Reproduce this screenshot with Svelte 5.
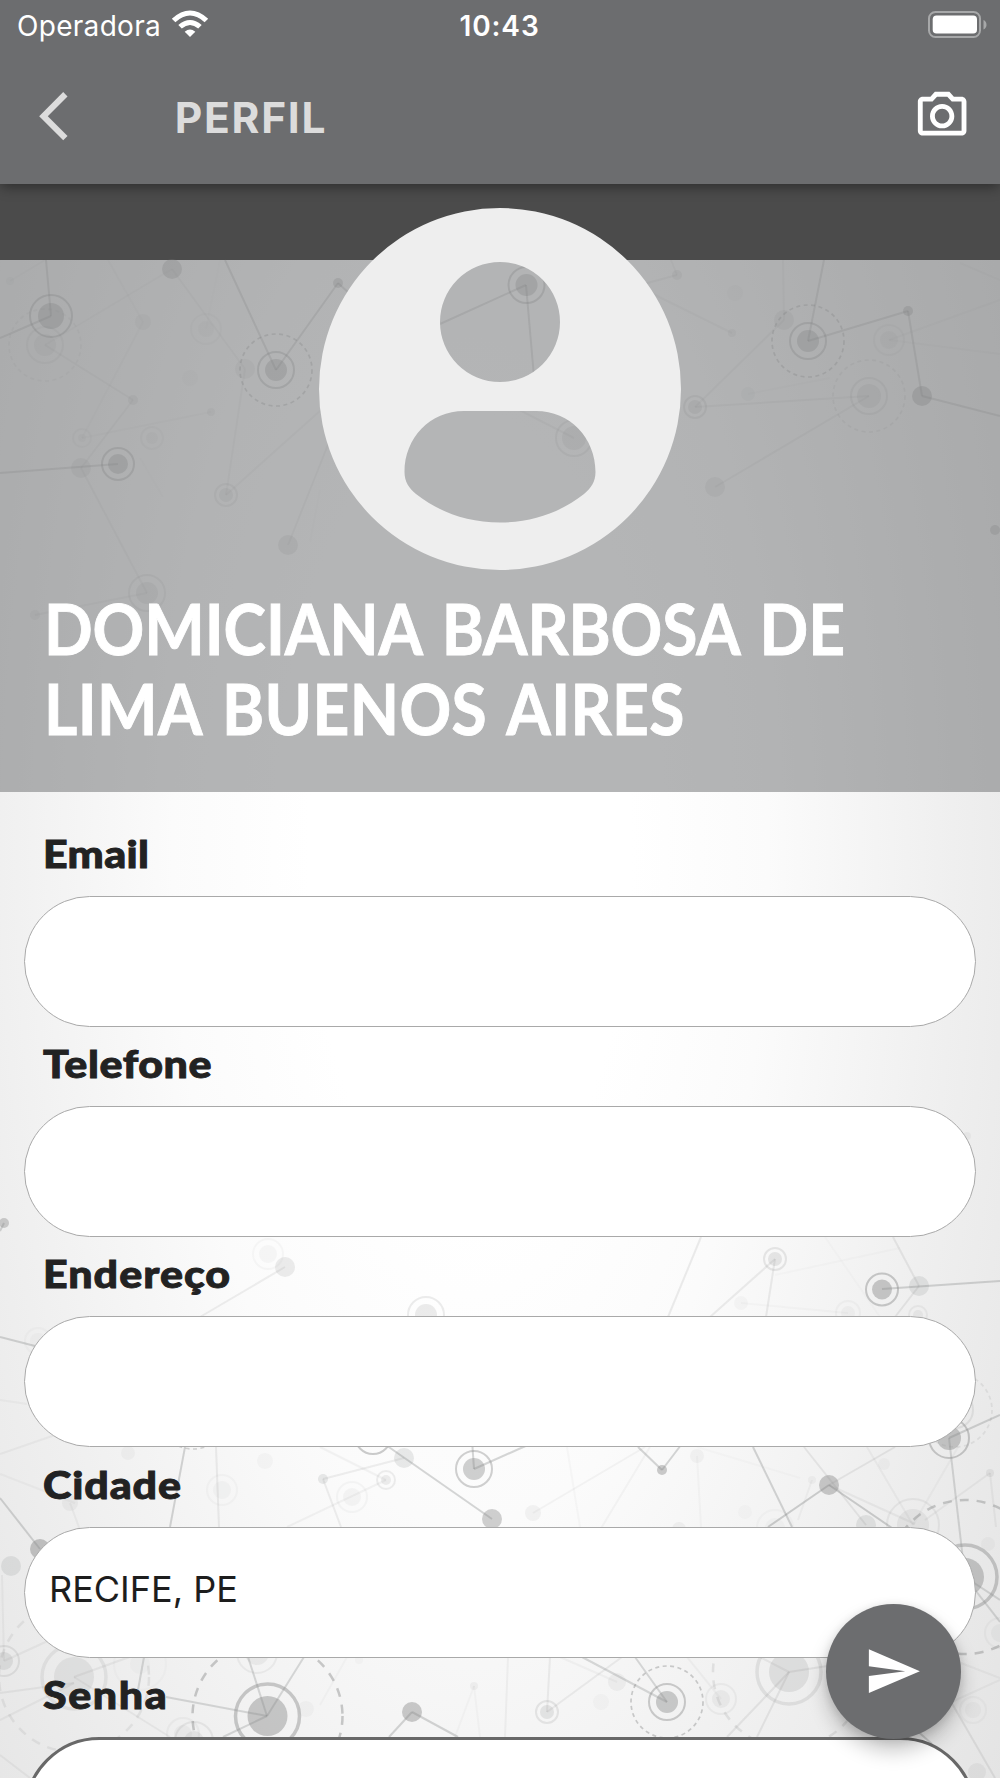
<script lang="ts">
  type Node = { x: number; y: number; r: number; o: number; ring?: number; dash?: number };

  const fields = [
    { label: "Email", value: "", spacing: 0.3 },
    { label: "Telefone", value: "", spacing: 0.5 },
    { label: "Endereço", value: "", spacing: 0.9 },
    { label: "Cidade", value: "RECIFE, PE", spacing: 0.8 },
    { label: "Senha", value: "", spacing: 1.4, focused: true },
  ];

  // x, y, radius, opacity, ring radius, dashed radius
  const nodes: Node[] = [
    [51, 316, 13, 0.5, 21], [45, 345, 11, 0.15, 18, 36], [172, 269, 10, 0.45], [276, 370, 11, 0.5, 18, 36],
    [245, 369, 10, 0.15], [338, 283, 5, 0.45], [133, 400, 5, 0.2], [10, 281, 4, 0.1], [143, 322, 8, 0.12],
    [206, 329, 8, 0.08, 15], [190, 378, 8, 0.06], [211, 412, 4, 0.15], [82, 438, 4, 0.1, 9], [81, 468, 10, 0.2],
    [118, 464, 10, 0.5, 16], [152, 438, 6, 0.1, 11], [226, 495, 7, 0.2, 11], [288, 545, 10, 0.25],
    [147, 593, 11, 0.2, 18], [35, 615, 5, 0.15], [526.5, 285, 11, 0.5, 18], [574, 438, 12, 0.2, 18],
    [677, 275, 5, 0.2], [732, 333, 4, 0.15], [735, 293, 8, 0.08], [784, 320, 10, 0.2], [808, 341, 11, 0.5, 18, 36],
    [908, 311, 5, 0.5], [922, 396, 10, 0.55], [889, 340, 9, 0.12, 15], [869, 396, 12, 0.22, 18, 36],
    [695, 407, 7, 0.25, 11], [748, 394, 7, 0.1], [715, 487, 10, 0.2], [995, 530, 5, 0.45],
    [967, 1136, 4, 0.1], [4, 1223, 5, 0.45], [268, 1254, 9, 0.06, 15], [285, 1267, 10, 0.18], [426, 1315, 11, 0.18, 18],
    [775, 1259, 7, 0.2, 11], [882, 1289.5, 10, 0.5, 16], [919, 1286, 10, 0.2], [741, 1303, 7, 0.06],
    [848, 1313, 7, 0.07, 12], [918, 1315, 5, 0.12, 9], [38, 1341, 8, 0.05, 13], [949, 1438, 12, 0.5, 20],
    [955, 1410, 11, 0.18, 18, 37], [193, 1413, 11, 0.4, 18, 36], [373, 1436, 11, 0.5, 18], [492, 1519, 10, 0.45],
    [474, 1469, 11, 0.45, 18], [404, 1458, 10, 0.2], [323, 1479, 5, 0.2], [386, 1480, 5, 0.15, 9],
    [352, 1497, 9, 0.07, 15], [265, 1461, 8, 0.06], [222, 1490, 9, 0.06, 15], [128, 1453, 7, 0.07],
    [70, 1503, 8, 0.1], [40, 1549, 10, 0.55], [11, 1566, 10, 0.2], [662, 1470, 5, 0.5], [829, 1485, 10, 0.5],
    [866, 1525, 10, 0.2], [913, 1525, 16, 0.13, 26], [965, 1577, 19, 0.5, 32, 77], [533, 1513, 8, 0.1],
    [697, 1456, 7, 0.08], [812, 1480, 4, 0.08], [990, 1473, 4, 0.15], [679, 1529, 7, 0.1], [884, 1464, 6, 0.06],
    [775, 1528, 10, 0.05, 18], [745, 1512, 7, 0.04], [74, 1677, 20, 0.16, 32, 75], [267.5, 1716, 20, 0.5, 32, 75],
    [257, 1653, 12, 0.12, 20], [4, 1661, 9, 0.2, 15], [412, 1712, 10, 0.5], [474, 1686, 4, 0.1],
    [547, 1712, 7, 0.2, 11], [667, 1702, 11, 0.48, 18, 36], [617, 1682, 9, 0.1], [721, 1699, 9, 0.1, 15],
    [789, 1672, 20, 0.2, 32, 76], [601, 1702, 8, 0.05], [183, 1734, 9, 0.08, 16], [194, 1741, 10, 0.15, 19],
    [977, 1772, 9, 0.12], [973, 1710, 8, 0.07, 13], [1000, 1633, 9, 0.08, 15], [988, 1544, 7, 0.07],
    [140, 1664, 10, 0.04, 26], [306, 1709, 8, 0.06], [359, 1660, 4, 0.05],
  ].map(([x, y, r, o, ring, dash]) => ({ x, y, r, o, ring, dash }));

  // x1, y1, x2, y2, opacity
  const links: number[][] = [
    [46, 260, 51, 316, 0.4], [0, 338, 51, 316, 0.4], [0, 473, 118, 464, 0.4], [225, 260, 276, 370, 0.4],
    [276, 370, 338, 283, 0.4], [338, 283, 350, 294, 0.4], [172, 269, 45, 345, 0.1], [172, 269, 245, 369, 0.12],
    [245, 369, 226, 495, 0.12], [226, 495, 330, 402, 0.12], [45, 345, 133, 400, 0.14], [133, 400, 81, 468, 0.14],
    [81, 468, 147, 593, 0.14], [147, 593, 35, 615, 0.12], [211, 412, 82, 438, 0.08], [143, 322, 82, 438, 0.07],
    [143, 322, 108, 260, 0.07], [10, 281, 45, 260, 0.07], [206, 329, 220, 260, 0.05], [288, 545, 345, 402, 0.15],
    [140, 458, 163, 497, 0.05], [310, 542, 320, 490, 0.04], [440, 324, 526, 285, 0.4], [526, 285, 536, 400, 0.4],
    [574, 438, 500, 400, 0.15], [677, 275, 640, 285, 0.15], [677, 275, 671, 260, 0.12], [732, 333, 645, 290, 0.12],
    [784, 320, 783, 260, 0.12], [784, 320, 695, 407, 0.14], [695, 407, 869, 396, 0.16], [869, 396, 715, 487, 0.16],
    [824, 260, 808, 341, 0.4], [808, 341, 908, 311, 0.4], [908, 311, 922, 396, 0.4], [922, 396, 1000, 416, 0.4],
    [889, 340, 1000, 300, 0.1], [889, 340, 1000, 354, 0.08], [960, 263, 1000, 280, 0.08], [748, 394, 830, 378, 0.06],
    [285, 1267, 200, 1317, 0.15], [775, 1259, 710, 1317, 0.17], [775, 1259, 766, 1317, 0.17], [701, 1237, 668, 1317, 0.18],
    [882, 1289, 1000, 1281, 0.4], [893, 1237, 919, 1286, 0.18], [919, 1286, 895, 1317, 0.18], [741, 1303, 848, 1313, 0.05],
    [825, 1237, 880, 1317, 0.04], [775, 1275, 900, 1248, 0.04], [4, 1223, 0, 1231, 0.4], [0, 1337, 35, 1346, 0.4],
    [0, 1400, 27, 1404, 0.08], [0, 1454, 55, 1435, 0.1], [0, 1474, 75, 1503, 0.08], [949, 1438, 1000, 1415, 0.4],
    [949, 1438, 965, 1577, 0.35], [185, 1447, 170, 1527, 0.4], [216, 1447, 219, 1527, 0.16], [373, 1436, 492, 1519, 0.4],
    [474, 1469, 472, 1440, 0.4], [474, 1469, 530, 1444, 0.4], [404, 1458, 323, 1479, 0.15], [323, 1479, 341, 1527, 0.15],
    [386, 1480, 287, 1527, 0.1], [386, 1480, 320, 1447, 0.1], [70, 1503, 80, 1530, 0.1], [0, 1498, 40, 1549, 0.4],
    [662, 1470, 638, 1447, 0.4], [662, 1470, 681, 1445, 0.4], [753, 1447, 792, 1527, 0.4], [829, 1485, 768, 1527, 0.45],
    [829, 1485, 892, 1528, 0.45], [829, 1485, 895, 1447, 0.18], [804, 1447, 866, 1525, 0.18], [829, 1485, 915, 1524, 0.12],
    [867, 1447, 913, 1525, 0.1], [958, 1447, 913, 1525, 0.08], [533, 1513, 645, 1447, 0.09], [650, 1447, 600, 1530, 0.08],
    [567, 1447, 580, 1527, 0.06], [697, 1456, 701, 1527, 0.06], [697, 1447, 800, 1478, 0.04], [990, 1473, 925, 1520, 0.12],
    [990, 1473, 996, 1527, 0.12], [812, 1480, 798, 1520, 0.08], [965, 1577, 1000, 1600, 0.35], [965, 1577, 1000, 1622, 0.35],
    [267, 1716, 248, 1657, 0.35], [267, 1716, 304, 1657, 0.35], [267, 1716, 166, 1697, 0.35], [267, 1716, 223, 1737, 0.35],
    [144, 1657, 138, 1690, 0.35], [74, 1677, 135, 1655, 0.14], [0, 1693, 74, 1683, 0.14], [0, 1720, 74, 1683, 0.12],
    [74, 1677, 170, 1737, 0.12], [0, 1755, 30, 1778, 0.12], [4, 1661, 50, 1640, 0.12], [4, 1661, 2, 1575, 0.1],
    [412, 1712, 389, 1737, 0.4], [412, 1712, 458, 1737, 0.4], [474, 1686, 455, 1737, 0.06], [474, 1686, 480, 1737, 0.06],
    [547, 1712, 550, 1657, 0.15], [547, 1712, 622, 1657, 0.15], [667, 1702, 582, 1657, 0.35], [667, 1702, 635, 1657, 0.35],
    [508, 1657, 505, 1737, 0.1], [560, 1657, 617, 1682, 0.08], [687, 1657, 721, 1699, 0.08], [789, 1672, 727, 1737, 0.18],
    [789, 1672, 757, 1737, 0.18], [789, 1672, 840, 1664, 0.18], [760, 1657, 789, 1672, 0.15], [950, 1700, 995, 1778, 0.2],
    [940, 1655, 1000, 1678, 0.1], [945, 1705, 1000, 1680, 0.1], [905, 1720, 932, 1744, 0.4], [347, 1657, 320, 1705, 0.06],
  ];

  // the upper part of the network is fainter, it sits under the profile header
  const fade = (y: number) => (y < 800 ? 0.54 : 0.86);
</script>

<div class="page">
  <svg class="network" width="1000" height="1778" viewBox="0 0 1000 1778" fill="none" stroke="#898a8a" stroke-width="2">
    {#each links as [x1, y1, x2, y2, o]}
      <line {x1} {y1} {x2} {y2} opacity={o * fade(y1)} />
    {/each}
    {#each nodes as n}
      <g opacity={n.o * fade(n.y)}>
        <circle cx={n.x} cy={n.y} r={n.r} fill="#888989" stroke="none" />
        {#if n.ring}
          <circle cx={n.x} cy={n.y} r={n.ring} stroke-width={n.ring > 28 ? 3.5 : 2} />
        {/if}
        {#if n.dash}
          <circle
            cx={n.x}
            cy={n.y}
            r={n.dash}
            stroke-width={n.dash > 60 ? 2.5 : 1.7}
            stroke-dasharray={n.dash > 60 ? "9 8" : "4 3.5"}
          />
        {/if}
      </g>
    {/each}
  </svg>

  <header>
    <div class="status">
      <div class="carrier">
        <span>Operadora</span>
        <svg width="38" height="27" viewBox="0 0 38 27" fill="#fff">
          <path d="M19 27 13.7 21.7Q19 17.3 24.3 21.7Z" />
          <path d="M10.8 18.6 7.3 15.1Q19 5 30.7 15.1L27.2 18.6Q19 11.2 10.8 18.6Z" />
          <path d="M4.4 12.3.8 8.7Q19-7.7 37.2 8.7L33.6 12.3Q19-1.1 4.4 12.3Z" />
        </svg>
      </div>
      <span class="clock">10:43</span>
      <svg class="battery" width="60" height="28" viewBox="0 0 60 28" fill="none">
        <rect x="1" y="1" width="51" height="25" rx="6.5" stroke="#a7a8a9" stroke-width="2" />
        <rect x="4.7" y="4.6" width="44.3" height="18" rx="3.8" fill="#fff" />
        <path d="M55.5 9Q58.5 10.5 58.5 13.7T55.5 18.5Z" fill="#a7a8a9" />
      </svg>
    </div>
    <div class="toolbar">
      <svg width="58.3" height="58.3" viewBox="0 0 24 24" fill="#dcdcdc">
        <path d="M17.51 3.87 15.73 2.1 5.84 12l9.9 9.9 1.77-1.77L9.38 12z" />
      </svg>
      <h1>PERFIL</h1>
      <svg width="58.3" height="58.3" viewBox="0 0 24 24" fill="#fff">
        <path
          d="M20 4h-3.17L15 2H9L7.17 4H4c-1.1 0-2 .9-2 2v12c0 1.1.9 2 2 2h16c1.1 0 2-.9 2-2V6c0-1.1-.9-2-2-2zm0 14H4V6h4.05l1.83-2h4.24l1.83 2H20v12zM12 7c-2.76 0-5 2.24-5 5s2.24 5 5 5 5-2.24 5-5-2.24-5-5-5zm0 8c-1.65 0-3-1.35-3-3s1.35-3 3-3 3 1.35 3 3-1.35 3-3 3z"
        />
      </svg>
    </div>
  </header>

  <div class="band"></div>

  <section class="hero">
    <svg class="avatar" width="362" height="362" viewBox="0 0 362 362">
      <path
        fill="#eee"
        fill-rule="evenodd"
        d="M181 0a181 181 0 1 0 0 362a181 181 0 1 0 0-362z M181 54a60 60 0 1 1 0 120a60 60 0 1 1 0-120z M145 203H217C251 203 276.500 230 276.500 264C276.500 274 272 280 265 286C242 304 214 314.500 181 314.500S120 304 97 286C90 280 85.500 274 85.500 264C85.500 230 111 203 145 203z"
      />
    </svg>
    <h2><span class="first">DOMICIANA BARBOSA DE</span><br />LIMA BUENOS AIRES</h2>
  </section>

  <form>
    {#each fields as field}
      <label>
        <span style="letter-spacing: {field.spacing}px">{field.label}</span>
        <input class:focused={field.focused} type="text" value={field.value} />
      </label>
    {/each}
  </form>

  <button class="send" type="button" aria-label="Enviar">
    <svg width="58.3" height="58.3" viewBox="0 0 24 24" fill="#fff">
      <path d="M2.010 21 23 12 2.010 3 2 10l15 2-15 2z" />
    </svg>
  </button>
</div>

<style>
  :global(body) { margin: 0; }
  .page {
    position: relative;
    width: 1000px;
    height: 1778px;
    overflow: hidden;
    font-family: Inter, sans-serif;
    background: radial-gradient(ellipse 620px 1400px at 47% 48%, #fff 26%, #fbfbfb 48%, #efefef 78%, #dedede 125%);
  }
  .network { position: absolute; inset: 0; }

  header {
    position: relative;
    z-index: 1;
    height: 183.5px;
    background: #6c6d6f;
    box-shadow: 0 4px 12px -1px rgba(0, 0, 0, 0.4);
    color: #fff;
  }
  .status {
    display: grid;
    grid-template-columns: 1fr auto 1fr;
    align-items: center;
    height: 50px;
    padding: 0 12px 0 16px;
    font-size: 28px;
  }
  .carrier { display: flex; align-items: center; gap: 10px; letter-spacing: 0.3px; }
  .carrier span { padding: 2px 0 0 1px; }
  .carrier svg { margin-top: -3px; }
  .clock { padding: 2px 5px 0 0; font-weight: 600; letter-spacing: 0.9px; }
  .battery { justify-self: end; margin-top: -1px; }
  .toolbar { display: flex; align-items: center; height: 132px; padding: 0 29px 0 24.5px; }
  h1 { flex: 1; margin: 2px 0 0 92px; font-size: 42.5px; font-weight: 700; letter-spacing: 1.7px; color: #dcdcdc; }

  .band { height: 76.5px; background: #4b4b4b; }

  .hero {
    position: relative;
    box-sizing: border-box;
    height: 532px;
    background: rgba(108, 109, 111, 0.51);
  }
  .avatar { display: block; margin: 0 auto; transform: translateY(-52px); }
  h2 {
    margin: -34px 0 0 44px;
    font: 700 70px/80px Lato, sans-serif;
    letter-spacing: 0.4px;
    word-spacing: 6px;
    color: #fff;
    white-space: nowrap;
    -webkit-text-stroke: 0.9px #fff;
    transform: scaleX(0.915);
    transform-origin: left;
  }
  .first { letter-spacing: -0.1px; }

  form { position: relative; padding: 38px 24px 0; }
  label { display: block; height: 210.2px; }
  label span {
    display: block;
    height: 66px;
    padding-left: 19px;
    font: 900 38px/47px Lato, sans-serif;
    color: #222;
    -webkit-text-stroke: 0.9px #222;
    transform: scaleX(1.13);
    transform-origin: 19px 0;
  }
  input {
    display: block;
    box-sizing: border-box;
    width: 952px;
    height: 131px;
    padding: 0 24px 7px;
    border: 1px solid #a9a9a9;
    border-radius: 66px;
    outline: none;
    background: #fff;
    font: 400 36px Inter, sans-serif;
    color: #1d1d1d;
  }
  input.focused { height: 151px; border: 3px solid #686868; border-radius: 76px; }

  .send {
    position: absolute;
    right: 39px;
    bottom: 39px;
    display: flex;
    align-items: center;
    justify-content: center;
    width: 135px;
    height: 135px;
    padding: 0;
    border: 0;
    border-radius: 50%;
    background: #6c6d6f;
    box-shadow: 0 12px 20px rgba(0, 0, 0, 0.22), 0 2px 10px rgba(0, 0, 0, 0.12);
  }
</style>
